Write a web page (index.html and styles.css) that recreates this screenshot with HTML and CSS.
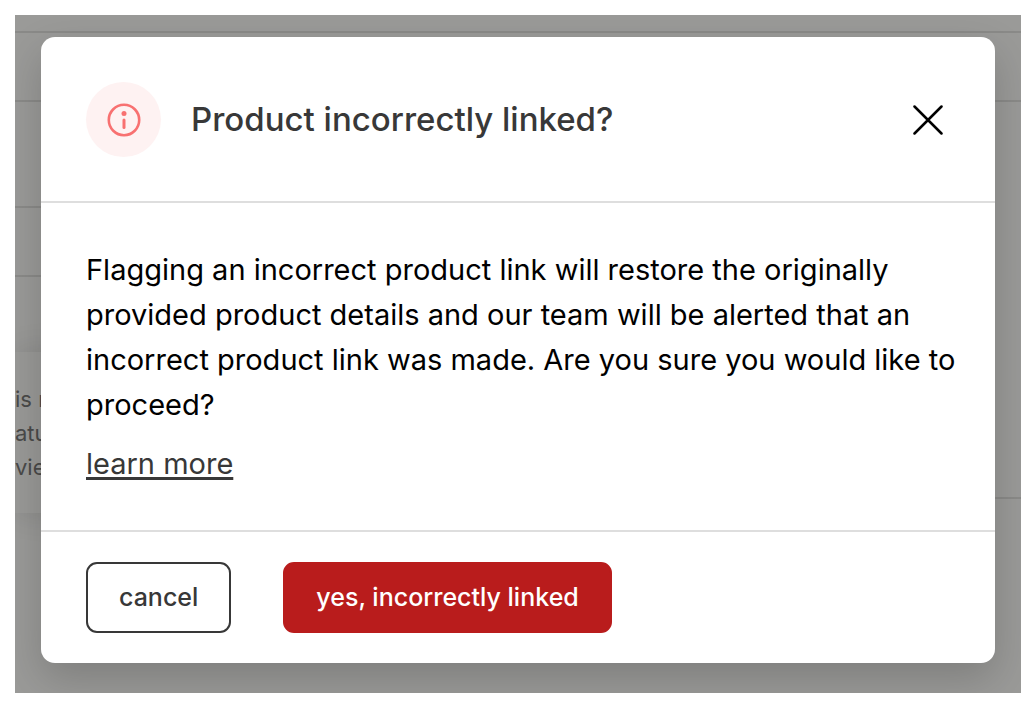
FILE: index.html
```html
<!DOCTYPE html>
<html lang="en">
<head>
  <meta charset="UTF-8">
  <meta name="viewport" content="width=device-width, initial-scale=1">
  <title>Product incorrectly linked?</title>
  <link rel="stylesheet" href="styles.css">
</head>
<body>

<div class="overlay">
  <!-- dimmed page behind the dialog -->
  <div class="page" aria-hidden="true">
    <div class="col">
      <div class="row row-top"></div>
      <div class="row"></div>
      <div class="row row-tall"></div>
      <div class="row"></div>
      <div class="note">
        <p>is not</p>
        <p>ature</p>
        <p>view</p>
      </div>
    </div>
    <div class="col">
      <div class="row row-top"></div>
      <div class="row"></div>
      <div class="row row-panel"></div>
    </div>
  </div>

  <section class="modal" role="dialog" aria-modal="true" aria-labelledby="modal-title">
    <header class="modal-header">
      <span class="badge">
        <svg width="34" height="34" viewBox="0 0 34 34" fill="none" aria-hidden="true">
          <circle cx="17" cy="17" r="15.2" stroke="currentColor" stroke-width="2.6"/>
          <circle cx="17" cy="10.6" r="2.5" fill="currentColor"/>
          <path d="M17 17v7.4" stroke="currentColor" stroke-width="3" stroke-linecap="round"/>
        </svg>
      </span>
      <h1 id="modal-title">Product incorrectly linked?</h1>
      <button class="close" type="button" aria-label="Close">
        <svg width="30" height="30" viewBox="0 0 30 30" fill="none" aria-hidden="true">
          <path d="M1.5 1.5l27 27M28.5 1.5l-27 27" stroke="currentColor" stroke-width="2.5" stroke-linecap="round"/>
        </svg>
      </button>
    </header>

    <div class="modal-body">
      <p>Flagging an incorrect product link will restore the originally provided product details and our team will be alerted that an incorrect product link was made. Are you sure you would like to proceed?</p>
      <a href="#">learn more</a>
    </div>

    <footer class="modal-footer">
      <button class="btn" type="button">cancel</button>
      <button class="btn btn-danger" type="button">yes, incorrectly linked</button>
    </footer>
  </section>
</div>

</body>
</html>
```
FILE: styles.css
```css
:root {
  --ink: #383838;
  --line: #dedede;
  --danger: #b91c1c;
}
* { box-sizing: border-box; margin: 0; padding: 0; }
body {
  padding: 15px 15px 11px;
  background: #fff;
  font-family: Inter, "Liberation Sans", sans-serif;
}

.overlay {
  position: relative;
  padding: 22px 26px 30px;
  background: #9a9a98;
  overflow: hidden;
}

/* page behind */
.page {
  position: absolute;
  inset: 0;
  display: grid;
  grid-template-columns: 1fr 1fr;
}
.row { height: 69px; border-bottom: 2px solid #8a8a88; }
.row-top { height: 18px; }
.row-tall { height: 106px; }
.row-panel { height: 397px; }
.note {
  height: 161px;
  margin-top: 75px;
  padding-top: 30px;
  background: #999997;
  box-shadow: 0 0 30px rgba(0,0,0,.12);
  color: #4a4a49;
  font-size: 22px;
  line-height: 34px;
}

/* dialog */
.modal {
  position: relative;
  background: #fff;
  border-radius: 14px;
  box-shadow: 0 16px 40px rgba(0,0,0,.18);
}
.modal-header {
  display: flex;
  align-items: center;
  gap: 30px;
  padding: 45px 52px 44px 45px;
  border-bottom: 2px solid var(--line);
}
.badge {
  display: flex;
  align-items: center;
  justify-content: center;
  width: 75px;
  height: 75px;
  border-radius: 50%;
  background: #fef2f2;
  color: #f87171;
}
.modal-header h1 {
  flex: 1;
  color: var(--ink);
  font-size: 33px;
  font-weight: 500;
  line-height: 45px;
}
.close {
  display: flex;
  border: 0;
  background: none;
  color: #000;
  cursor: pointer;
}

.modal-body {
  padding: 44px 30px 44px 45px;
  color: #000;
  font-size: 29px;
  line-height: 45px;
}
.modal-body a {
  display: inline-block;
  margin-top: 14px;
  color: var(--ink);
  text-decoration-thickness: 3px;
  text-underline-offset: 3px;
}

.modal-footer {
  display: flex;
  gap: 52px;
  padding: 30px 45px;
  border-top: 2px solid var(--line);
}
.btn {
  padding: 0 31px;
  border: 2px solid var(--ink);
  border-radius: 11px;
  background: #fff;
  color: var(--ink);
  font-family: inherit;
  font-size: 25px;
  font-weight: 500;
  line-height: 67px;
  cursor: pointer;
}
.btn-danger {
  border-color: var(--danger);
  background: var(--danger);
  color: #fff;
}
```
